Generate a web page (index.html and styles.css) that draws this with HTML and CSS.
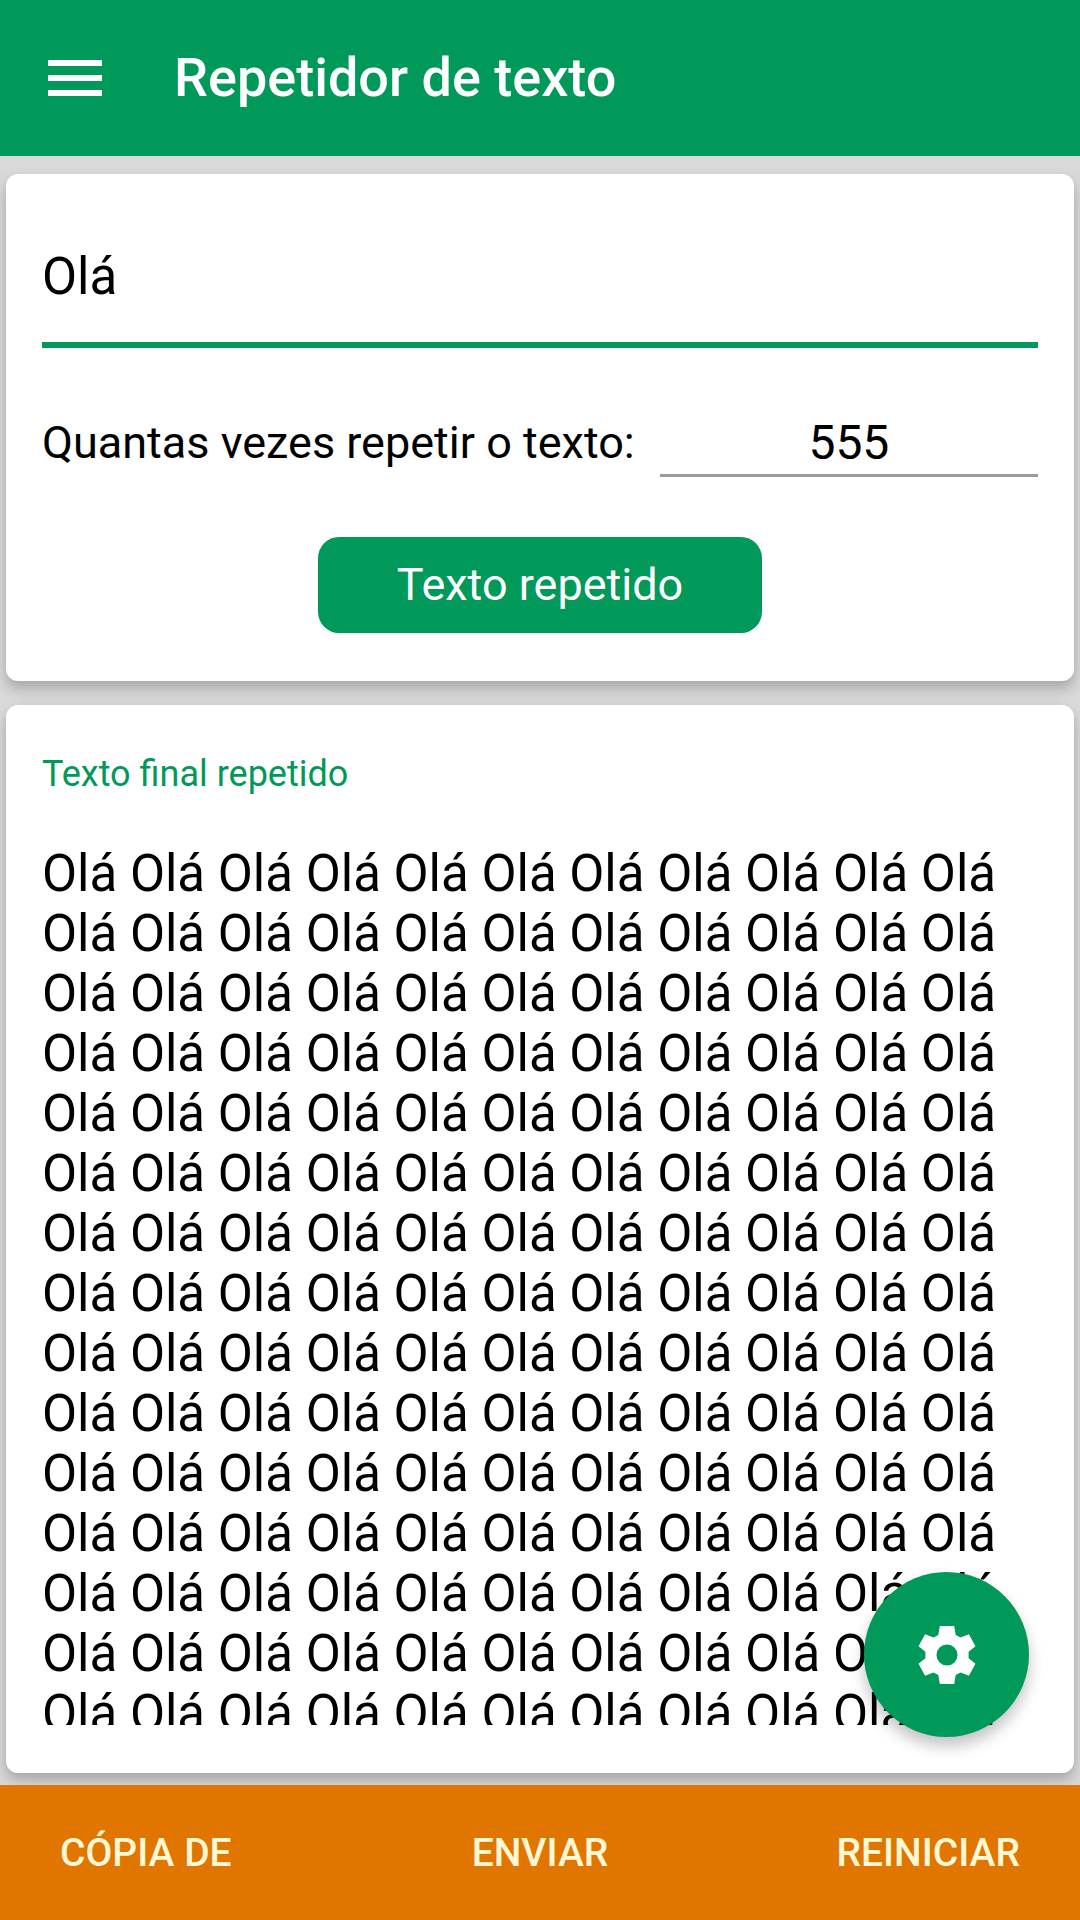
FILE: index.html
```html
<!DOCTYPE html>
<html lang="pt">
  <head>
    <meta charset="UTF-8" />
    <meta name="viewport" content="width=device-width, initial-scale=1.0" />
    <title>Repetidor de texto</title>
    <link rel="stylesheet" href="styles.css">
  </head>
  <body>
    <header class="toolbar">
      <button class="icon-btn" type="button" aria-label="Menu">
        <svg class="icon" viewBox="0 0 24 24"><path d="M3 18h18v-2H3v2zm0-5h18v-2H3v2zm0-7v2h18V6H3z" /></svg>
      </button>
      <h1>Repetidor de texto</h1>
    </header>

    <main class="content">
      <form class="card">
        <input class="text-input" id="textInput" type="text" value="Olá" aria-label="Texto" />
        <div class="count-row">
          <label for="countInput">Quantas vezes repetir o texto:</label>
          <input class="count-input" id="countInput" type="text" inputmode="numeric" value="555" />
        </div>
        <button class="repeat-btn" type="submit">Texto repetido</button>
      </form>

      <section class="card result">
        <label class="result-title" for="output">Texto final repetido</label>
        <textarea class="output" id="output" readonly></textarea>
      </section>
    </main>

    <button class="fab" type="button" aria-label="Configurações">
      <svg class="icon" viewBox="-12 -12 24 24">
        <path fill-rule="evenodd" d="M-2.4 -9.7L2.4 -9.7L2.9 -6.7L4.5 -5.8L7.3 -6.9L9.5 -2.9L7.2 -1.1L7.2 1.1L9.5 2.9L7.3 6.9L4.5 5.8L2.9 6.7L2.4 9.7L-2.4 9.7L-2.9 6.7L-4.5 5.8L-7.3 6.9L-9.5 2.9L-7.2 1.1L-7.2 -1.1L-9.5 -2.9L-7.3 -6.9L-4.5 -5.8L-2.9 -6.7zM0 -3.5a3.5 3.5 0 1 0 0 7a3.5 3.5 0 1 0 0 -7z" />
      </svg>
    </button>

    <footer class="actions">
      <button type="button">CÓPIA DE</button>
      <button type="button">ENVIAR</button>
      <button type="button" id="resetBtn">REINICIAR</button>
    </footer>

    <script src="script.js"></script>
  </body>
</html>
```

FILE: styles.css
```css
* {
  margin: 0;
  padding: 0;
  box-sizing: border-box;
}

body {
  height: 100vh;
  display: flex;
  flex-direction: column;
  background-color: #dadada;
  font-family: Roboto, "Liberation Sans", sans-serif;
  color: #000;
  overflow: hidden;
}

button,
input,
textarea {
  border: none;
  background: none;
  color: inherit;
  font-family: inherit;
  outline: none;
}

button {
  cursor: pointer;
}

.icon {
  display: block;
  width: 72px;
  height: 72px;
  fill: #fff;
}

.toolbar {
  display: flex;
  align-items: center;
  gap: 63px;
  padding: 42px 39px;
  background-color: #00995a;
  color: #fff;
}

.toolbar h1 {
  font-size: 54px;
  font-weight: 500;
  line-height: 72px;
}

.content {
  flex: 1;
  min-height: 0;
  display: flex;
  flex-direction: column;
  gap: 24px;
  padding: 18px 6px 12px;
}

.card {
  display: flex;
  flex-direction: column;
  padding: 36px;
  background-color: #fff;
  border-radius: 12px;
  box-shadow: 0 8px 16px rgba(0, 0, 0, 0.2), 0 4px 8px rgba(0, 0, 0, 0.06);
}

.text-input {
  width: 100%;
  height: 138px;
  border-bottom: 6px solid #00995a;
  font-size: 51px;
}

.count-row {
  display: flex;
  gap: 25px;
  margin-top: 60px;
  font-size: 45px;
  line-height: 69px;
}

.count-input {
  flex: 1;
  min-width: 0;
  height: 69px;
  padding-top: 2px;
  border-bottom: 3px solid #9b9b9b;
  font-size: 48px;
  text-align: center;
}

.repeat-btn {
  align-self: center;
  margin: 60px 0 12px;
  padding: 18px 79px;
  border-radius: 21px;
  background-color: #00995a;
  color: #fff;
  font-size: 45px;
  line-height: 60px;
}

.result {
  flex: 1;
  min-height: 0;
  padding-bottom: 48px;
}

.result-title {
  margin: 12px 0 48px;
  color: #00995a;
  font-size: 36px;
  line-height: 43px;
}

.output {
  flex: 1;
  min-height: 0;
  resize: none;
  scrollbar-width: none;
  font-size: 51px;
  line-height: 60px;
}

/* floats over the result card */
.fab {
  position: fixed;
  right: 51px;
  bottom: 183px;
  display: flex;
  align-items: center;
  justify-content: center;
  width: 165px;
  height: 165px;
  border-radius: 50%;
  background-color: #00995a;
  box-shadow: 0 9px 15px rgba(0, 0, 0, 0.24);
}

.actions {
  position: relative;
  display: grid;
  grid-template-columns: 1fr auto 1fr;
  padding: 37px 60px 35px;
  background-color: #e07600;
  color: #fff8d5;
}

.actions button {
  font-size: 39px;
  font-weight: 500;
  line-height: 63px;
}

.actions button:first-child {
  justify-self: start;
}

.actions button:last-child {
  justify-self: end;
}
```

FILE: script.js
```javascript
const form = document.querySelector("form");
const textInput = document.getElementById("textInput");
const countInput = document.getElementById("countInput");
const output = document.getElementById("output");

function repeatText() {
  const count = Number(countInput.value) || 0;
  output.value = Array(count).fill(textInput.value).join(" ");
}

form.addEventListener("submit", (e) => {
  e.preventDefault();
  repeatText();
});

document.getElementById("resetBtn").addEventListener("click", () => {
  form.reset();
  output.value = "";
});

repeatText();
```
